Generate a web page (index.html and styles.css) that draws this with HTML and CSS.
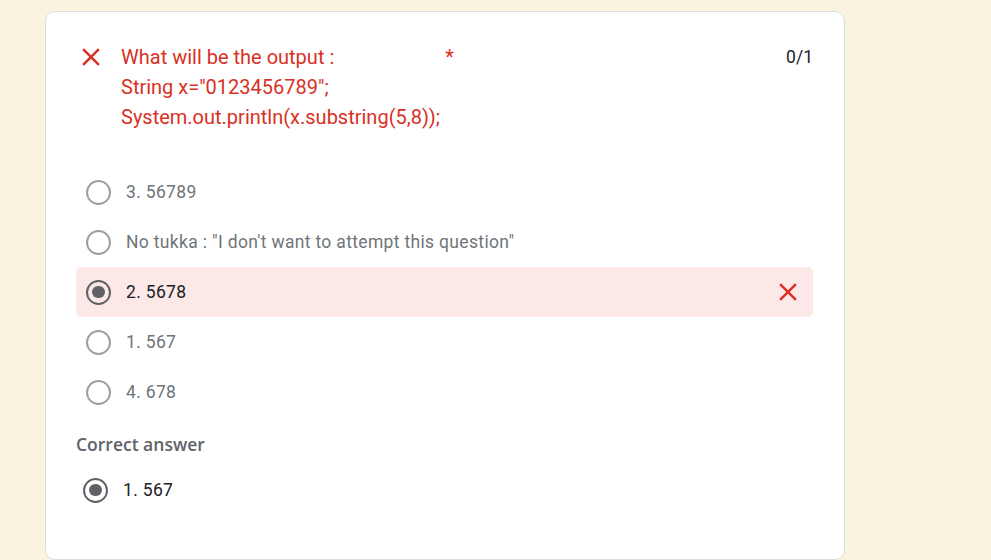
FILE: index.html
```html
<!DOCTYPE html>
<html lang="en">
<head>
<meta charset="utf-8">
<title>Quiz result</title>
<link rel="stylesheet" href="styles.css">
</head>
<body>
<div class="card">
  <div class="header">
    <svg class="icon-x" viewBox="0 0 24 24"><path d="M19 6.41L17.59 5 12 10.59 6.41 5 5 6.41 10.59 12 5 17.59 6.41 19 12 13.41 17.59 19 19 17.59 13.41 12z"/></svg>
    <div class="title">
      <div>What will be the output :<span class="req">*</span></div>
      <div>String x="0123456789";</div>
      <div>System.out.println(x.substring(5,8));</div>
    </div>
    <div class="score">0/1</div>
  </div>
  <div class="options">
    <div class="opt"><span class="radio"></span><span class="label">3. 56789</span></div>
    <div class="opt"><span class="radio"></span><span class="label">No tukka : "I don't want to attempt this question"</span></div>
    <div class="opt wrong"><span class="radio checked"></span><span class="label">2. 5678</span>
      <svg class="icon-x small" viewBox="0 0 24 24"><path d="M19 6.41L17.59 5 12 10.59 6.41 5 5 6.41 10.59 12 5 17.59 6.41 19 12 13.41 17.59 19 19 17.59 13.41 12z"/></svg>
    </div>
    <div class="opt"><span class="radio"></span><span class="label">1. 567</span></div>
    <div class="opt"><span class="radio"></span><span class="label">4. 678</span></div>
  </div>
  <div class="correct-title">Correct answer</div>
  <div class="opt correct"><span class="radio checked"></span><span class="label">1. 567</span></div>
</div>
</body>
</html>
```

FILE: styles.css
```css
html, body {
  margin: 0;
  padding: 0;
  background: #faf3de;
  font-family: Roboto, "Liberation Sans", Arial, sans-serif;
}
body {
  padding: 11px 0 0 45px;
  height: 560px;
  overflow: hidden;
  box-sizing: border-box;
}
.card {
  width: 800px;
  height: 549px;
  box-sizing: border-box;
  background: #fff;
  border: 1px solid #dadce0;
  border-radius: 10px;
  padding: 30px 31px 0 30px;
}
.header {
  display: flex;
  align-items: flex-start;
}
.icon-x {
  width: 30px;
  height: 30px;
  fill: #d93025;
  flex: none;
  margin-right: 15px;
}
.title {
  flex: 1;
  color: #d93025;
  font-size: 20px;
  line-height: 30px;
}
.req {
  margin-left: 111px;
}
.score {
  color: #202124;
  font-size: 17.5px;
  line-height: 30px;
}
.options {
  margin-top: 35px;
  display: flex;
  flex-direction: column;
}
.opt {
  display: flex;
  align-items: center;
  height: 50px;
  padding: 0 10px;
  border-radius: 5px;
  gap: 15px;
}
.opt .label {
  flex: 1;
  color: #70757a;
  font-size: 17.5px;
  letter-spacing: 0.33px;
}
.radio {
  width: 25px;
  height: 25px;
  box-sizing: border-box;
  border: 2.5px solid #9aa0a6;
  border-radius: 50%;
  flex: none;
  display: flex;
  align-items: center;
  justify-content: center;
}
.radio.checked {
  border-color: #5f6368;
}
.radio.checked::after {
  content: "";
  width: 12.5px;
  height: 12.5px;
  border-radius: 50%;
  background: #5f6368;
}
.wrong {
  background: #fce8e6;
}
.wrong .label, .correct .label {
  color: #202124;
}
.icon-x.small {
  margin-right: 0;
}
.correct-title {
  margin-top: 15px;
  color: #5f6368;
  font-family: "Open Sans", Roboto, sans-serif;
  font-size: 17.5px;
  font-weight: 600;
  line-height: 24px;
}
.correct {
  margin-top: 9px;
  padding-left: 7px;
}
```
